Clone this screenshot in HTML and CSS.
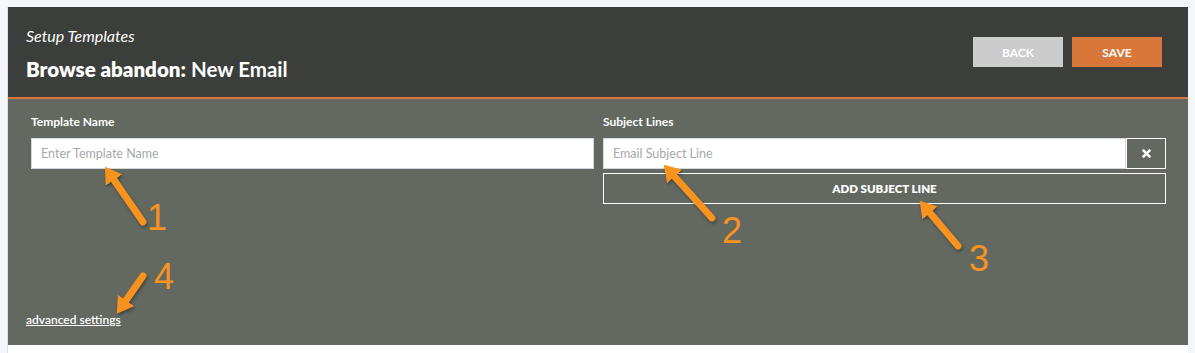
FILE: index.html
```html
<!DOCTYPE html>
<html lang="en">
<head>
  <meta charset="UTF-8" />
  <title>Setup Templates – Browse abandon</title>
  <link rel="stylesheet" href="styles.css">
</head>
<body>
  <div id="page">
    <!-- Header -->
    <div class="top-bar">
      <div class="titles">
        <div class="crumb">Setup Templates</div>
        <h1><b>Browse abandon:</b> New Email</h1>
      </div>
      <div class="actions">
        <button class="btn btn-back">BACK</button>
        <button class="btn btn-save">SAVE</button>
      </div>
    </div>

    <!-- Form -->
    <div class="form-area">
      <div class="form-grid">
        <div class="field">
          <label class="field-label">Template Name</label>
          <input class="text-input" type="text" placeholder="Enter Template Name">
        </div>
        <div class="field">
          <label class="field-label">Subject Lines</label>
          <div class="subject-row">
            <input class="text-input" type="text" placeholder="Email Subject Line">
            <button class="remove-btn" title="Remove">
              <svg width="9" height="9" viewBox="0 0 10 10"><path d="M1.8 1.8 L8.2 8.2 M8.2 1.8 L1.8 8.2" stroke="#fff" stroke-width="2.8" stroke-linecap="square"/></svg>
            </button>
          </div>
          <button class="add-btn">ADD SUBJECT LINE</button>
        </div>
      </div>
      <a class="adv-link" href="#">advanced settings</a>
    </div>
    <div class="page-foot"></div>

    <!-- Annotations -->
    <svg class="notes" width="1195" height="353" viewBox="0 0 1195 353">
      <defs>
        <marker id="head" viewBox="0 0 10 10" refX="0" refY="5" markerUnits="userSpaceOnUse" markerWidth="16" markerHeight="20" orient="auto" preserveAspectRatio="none">
          <path d="M0,0 L10,5 L0,10 z" fill="#f7931e"/>
        </marker>
      </defs>
      <g class="arrows" stroke="#f7931e" stroke-width="7" stroke-linecap="round" fill="none" marker-end="url(#head)">
        <line x1="143" y1="222" x2="114" y2="180"/>
        <line x1="712" y1="218" x2="674.5" y2="176.5"/>
        <line x1="958" y1="246" x2="930" y2="213"/>
        <line x1="143" y1="276" x2="126" y2="300.5"/>
      </g>
      <g class="digits">
        <text x="147" y="230">1</text>
        <text x="722" y="243">2</text>
        <text x="969" y="271">3</text>
        <text x="154" y="289">4</text>
      </g>
    </svg>
  </div>
</body>
</html>
```

FILE: styles.css
```css
:root {
  --dark: #3b3e3a;
  --slate: #636960;
  --orange: #d9773a;
  --note: #f7931e;
}
* { box-sizing: border-box; }
body {
  margin: 0;
  background: #f4f6f9;
  font-family: Lato, "Open Sans", sans-serif;
  padding: 7px 7px 0 7px;
}
#page { position: relative; width: 1181px; background: #fff; border-left: 1px solid #dcdfe3; }

/* ===== Header ===== */
.top-bar {
  height: 92px;
  background: var(--dark);
  border-bottom: 2px solid var(--orange);
  display: flex;
  justify-content: space-between;
  align-items: flex-start;
  padding: 19px 26px 0 18px;
  color: #fff;
}
.crumb { font-style: italic; font-size: 16px; line-height: 20px; }
h1 { margin: 10px 0 0; font-size: 20.5px; line-height: 27px; font-weight: 700; }
h1 b { font-weight: 800; }
.actions { display: flex; gap: 9px; padding-top: 11px; }
.btn { width: 90px; height: 30px; border: none; color: #fff; font-family: inherit; font-weight: 700; font-size: 12px; cursor: pointer; }
.btn-back { background: #cccccc; }
.btn-save { background: var(--orange); }

/* ===== Form ===== */
.form-area {
  height: 246px;
  background: var(--slate);
  padding: 15px 21px 0 23px;
  display: flex;
  flex-direction: column;
}
.form-grid { display: grid; grid-template-columns: 563px 563px; gap: 9px; }
.field-label { display: block; color: #fff; font-weight: 700; font-size: 12px; line-height: 16px; margin-bottom: 8px; }
.text-input {
  width: 100%;
  height: 31px;
  border: 1px solid #d5d7da;
  padding: 0 9px;
  font-family: inherit;
  font-size: 12.5px;
  outline: none;
}
.text-input::placeholder { color: #a6a8ab; }
.subject-row { display: flex; }
.remove-btn {
  flex: 0 0 40px;
  height: 31px;
  background: var(--slate);
  border: 1px solid #fff;
  display: flex;
  align-items: center;
  justify-content: center;
  cursor: pointer;
}
.add-btn {
  width: 100%;
  height: 31px;
  margin-top: 4px;
  background: transparent;
  border: 1px solid #fff;
  color: #fff;
  font-family: inherit;
  font-weight: 800;
  font-size: 11.5px;
  cursor: pointer;
}
.adv-link { margin-top: auto; margin-bottom: 18px; align-self: flex-start; margin-left: -5px; color: #fff; font-size: 12px; font-weight: 600; }
.page-foot { height: 8px; }

/* ===== Annotations ===== */
.notes { position: absolute; left: -8px; top: -7px; pointer-events: none; }
.arrows { filter: drop-shadow(1px 2px 1.5px rgba(0,0,0,.35)); }
.digits text { fill: var(--note); font-family: "Liberation Sans", sans-serif; font-size: 36px; }
```
